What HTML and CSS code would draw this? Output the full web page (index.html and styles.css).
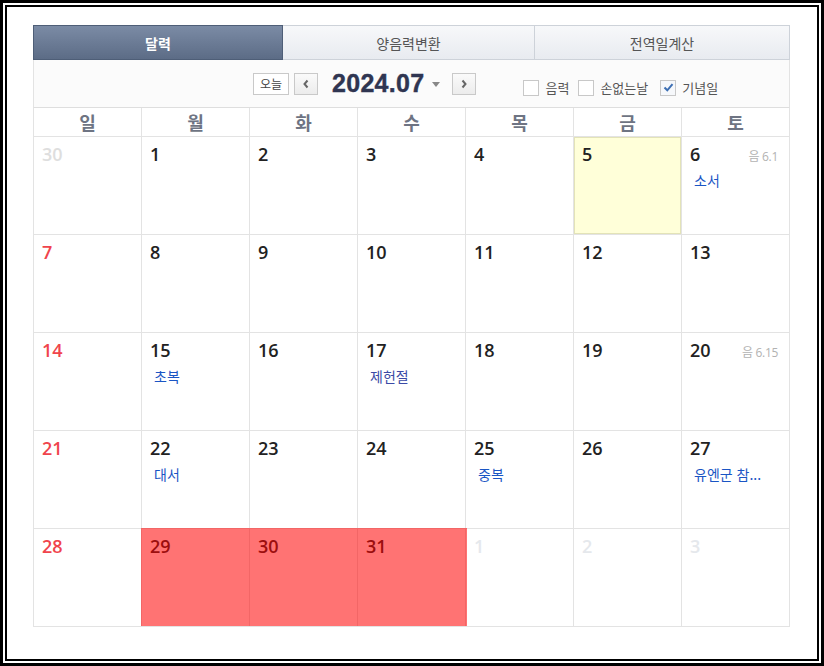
FILE: index.html
```html
<!DOCTYPE html>
<html lang="ko">
<head>
<meta charset="utf-8">
<title>달력</title>
<link rel="stylesheet" href="styles.css">
</head>
<body>
<div class="frame">
  <div class="inner">
    <div class="cal">
      <div class="tabs">
        <div class="tab tab-active">달력</div>
        <div class="tab tab-mid">양음력변환</div>
        <div class="tab tab-last">전역일계산</div>
      </div>
      <div class="toolbar">
        <div class="nav">
          <button class="btn btn-today">오늘</button>
          <button class="btn btn-arrow"><svg width="8" height="10" viewBox="0 0 8 10"><polyline points="5.5,1.5 2.5,5 5.5,8.5" fill="none" stroke="#666" stroke-width="2"/></svg></button>
          <span class="title">2024.07</span>
          <span class="caret"></span>
          <button class="btn btn-arrow"><svg width="8" height="10" viewBox="0 0 8 10"><polyline points="2.5,1.5 5.5,5 2.5,8.5" fill="none" stroke="#666" stroke-width="2"/></svg></button>
        </div>
        <div class="checks">
          <label class="check"><span class="box"></span>음력</label>
          <label class="check"><span class="box"></span>손없는날</label>
          <label class="check"><span class="box box-on"><svg width="11" height="11" viewBox="0 0 11 11"><polyline points="1.5,5.5 4.3,8.3 9.5,2.2" fill="none" stroke="#3d6fb3" stroke-width="2"/></svg></span>기념일</label>
        </div>
      </div>
      <div class="dow">
        <div class="dcell">일</div><div class="dcell">월</div><div class="dcell">화</div><div class="dcell">수</div><div class="dcell">목</div><div class="dcell">금</div><div class="dcell">토</div>
      </div>
      <div class="grid">
        <div class="cell"><div class="top"><span class="num other">30</span></div></div>
        <div class="cell"><div class="top"><span class="num">1</span></div></div>
        <div class="cell"><div class="top"><span class="num">2</span></div></div>
        <div class="cell"><div class="top"><span class="num">3</span></div></div>
        <div class="cell"><div class="top"><span class="num">4</span></div></div>
        <div class="cell today"><div class="top"><span class="num">5</span></div></div>
        <div class="cell"><div class="top"><span class="num">6</span><span class="lunar">음 6.1</span></div><div class="ev">소서</div></div>

        <div class="cell"><div class="top"><span class="num sun">7</span></div></div>
        <div class="cell"><div class="top"><span class="num">8</span></div></div>
        <div class="cell"><div class="top"><span class="num">9</span></div></div>
        <div class="cell"><div class="top"><span class="num">10</span></div></div>
        <div class="cell"><div class="top"><span class="num">11</span></div></div>
        <div class="cell"><div class="top"><span class="num">12</span></div></div>
        <div class="cell"><div class="top"><span class="num">13</span></div></div>

        <div class="cell"><div class="top"><span class="num sun">14</span></div></div>
        <div class="cell"><div class="top"><span class="num">15</span></div><div class="ev">초복</div></div>
        <div class="cell"><div class="top"><span class="num">16</span></div></div>
        <div class="cell"><div class="top"><span class="num">17</span></div><div class="ev ev-holiday">제헌절</div></div>
        <div class="cell"><div class="top"><span class="num">18</span></div></div>
        <div class="cell"><div class="top"><span class="num">19</span></div></div>
        <div class="cell"><div class="top"><span class="num">20</span><span class="lunar">음 6.15</span></div></div>

        <div class="cell"><div class="top"><span class="num sun">21</span></div></div>
        <div class="cell"><div class="top"><span class="num">22</span></div><div class="ev">대서</div></div>
        <div class="cell"><div class="top"><span class="num">23</span></div></div>
        <div class="cell"><div class="top"><span class="num">24</span></div></div>
        <div class="cell"><div class="top"><span class="num">25</span></div><div class="ev">중복</div></div>
        <div class="cell"><div class="top"><span class="num">26</span></div></div>
        <div class="cell"><div class="top"><span class="num">27</span></div><div class="ev">유엔군 참...</div></div>

        <div class="cell"><div class="top"><span class="num sun">28</span></div></div>
        <div class="cell"><div class="top"><span class="num">29</span></div></div>
        <div class="cell"><div class="top"><span class="num">30</span></div></div>
        <div class="cell"><div class="top"><span class="num">31</span></div></div>
        <div class="cell"><div class="top"><span class="num next">1</span></div></div>
        <div class="cell"><div class="top"><span class="num next">2</span></div></div>
        <div class="cell"><div class="top"><span class="num next">3</span></div></div>

        <div class="highlight"></div>
      </div>
    </div>
  </div>
</div>
</body>
</html>
```

FILE: styles.css
```css
* { box-sizing: border-box; }
html, body { margin: 0; padding: 0; background: #fff; }

.frame {
  width: 824px;
  height: 666px;
  border: 3px solid #000;
  padding: 2px;
  background: #fff;
}
.inner {
  height: 100%;
  border: 2px solid #000;
  padding: 18px 0 0 26px;
  background: #fff;
}

.cal {
  width: 757px;
  font-family: "Open Sans", "Noto Sans CJK KR", sans-serif;
}

/* tabs */
.tabs {
  display: flex;
  height: 35px;
}
.tab {
  display: flex;
  align-items: center;
  justify-content: center;
  font-family: "Noto Sans CJK KR", sans-serif;
  font-size: 14px;
  color: #555;
  background: linear-gradient(#f7f8fa, #e8ebf0);
  border: 1px solid #cdd2d9;
  border-left: none;
}
.tab-active {
  width: 250px;
  color: #fff;
  font-weight: bold;
  background: linear-gradient(#7b8ba5, #5c6c86);
  border: 1px solid #4e5e77;
}
.tab-mid { width: 252px; }
.tab-last { flex: 1; }

/* toolbar */
.toolbar {
  height: 48px;
  display: flex;
  align-items: center;
  background: #fbfbfb;
  border-left: 1px solid #e3e3e3;
  border-right: 1px solid #e3e3e3;
  border-bottom: 1px solid #dedede;
  padding-left: 219px;
}
.nav {
  display: flex;
  align-items: center;
}
.btn {
  height: 22px;
  margin: 0;
  padding: 0;
  border: 1px solid #c9c9c9;
  background: #fff;
  display: flex;
  align-items: center;
  justify-content: center;
  font-family: "Noto Sans CJK KR", sans-serif;
  cursor: pointer;
}
.btn-today {
  width: 36px;
  font-size: 12px;
  color: #444;
  margin-right: 5px;
}
.btn-arrow {
  width: 24px;
  background: linear-gradient(#fafafa, #ececec);
}
.title {
  font-family: "Liberation Sans", Arial, sans-serif;
  font-weight: bold;
  font-size: 25px;
  color: #2f3551;
  margin-left: 14px;
  letter-spacing: 0.3px;
  -webkit-text-stroke: 0.4px #2f3551;
}
.caret {
  width: 0;
  height: 0;
  border-left: 4.5px solid transparent;
  border-right: 4.5px solid transparent;
  border-top: 5px solid #888;
  margin-left: 8px;
  margin-right: 12px;
  margin-top: 1px;
}

.checks {
  display: flex;
  align-items: center;
  margin-left: 47px;
  margin-top: 8px;
}
.check {
  display: flex;
  align-items: center;
  font-family: "Noto Sans CJK KR", sans-serif;
  font-size: 13px;
  color: #555;
  margin-right: 9px;
}
.check:nth-child(2) { margin-right: 12px; }
.check:last-child { margin-right: 0; }
.box {
  width: 16px;
  height: 16px;
  border: 1px solid #c8c8c8;
  background: #fff;
  margin-right: 6px;
  display: flex;
  align-items: center;
  justify-content: center;
}
.box-on { background: #f6f8fb; }

/* day of week header */
.dow {
  display: grid;
  grid-template-columns: repeat(7, 108px);
  border-left: 1px solid #e3e3e3;
  border-bottom: 1px solid #e3e3e3;
}
.dcell {
  height: 28px;
  border-right: 1px solid #e3e3e3;
  display: flex;
  align-items: center;
  justify-content: center;
  font-family: "Noto Sans CJK KR", sans-serif;
  font-weight: bold;
  font-size: 18px;
  color: #6e7483;
  background: #fff;
}

/* date grid */
.grid {
  position: relative;
  display: grid;
  grid-template-columns: repeat(7, 108px);
  grid-auto-rows: 98px;
  border-left: 1px solid #e3e3e3;
}
.cell {
  border-right: 1px solid #e3e3e3;
  border-bottom: 1px solid #e3e3e3;
  padding: 5px 11px 0 8px;
  background: #fff;
}
.cell.today {
  background: #ffffd9;
  box-shadow: inset 0 0 0 1px #e3e3b8;
}
.top {
  display: flex;
  justify-content: space-between;
  align-items: baseline;
  height: 24px;
}
.num {
  font-family: "Open Sans", sans-serif;
  font-weight: 600;
  font-size: 18px;
  line-height: 24px;
  color: #222;
}
.num.sun { color: #f0444c; }
.num.other { color: #dedede; }
.num.next { color: #e5e8ec; }
.lunar {
  font-family: "Open Sans", "Noto Sans CJK KR", sans-serif;
  font-size: 12px;
  color: #b2b2b2;
  letter-spacing: -0.3px;
}
.ev {
  margin-top: 4px;
  padding-left: 4px;
  font-family: "Noto Sans CJK KR", sans-serif;
  font-size: 14px;
  line-height: 20px;
  color: #1a55c4;
  white-space: nowrap;
}
.ev-holiday { color: #3b4aa6; }

.highlight {
  position: absolute;
  left: 107px;
  top: 391px;
  width: 326px;
  height: 98px;
  background: rgba(255, 0, 0, 0.55);
  pointer-events: none;
}
```
